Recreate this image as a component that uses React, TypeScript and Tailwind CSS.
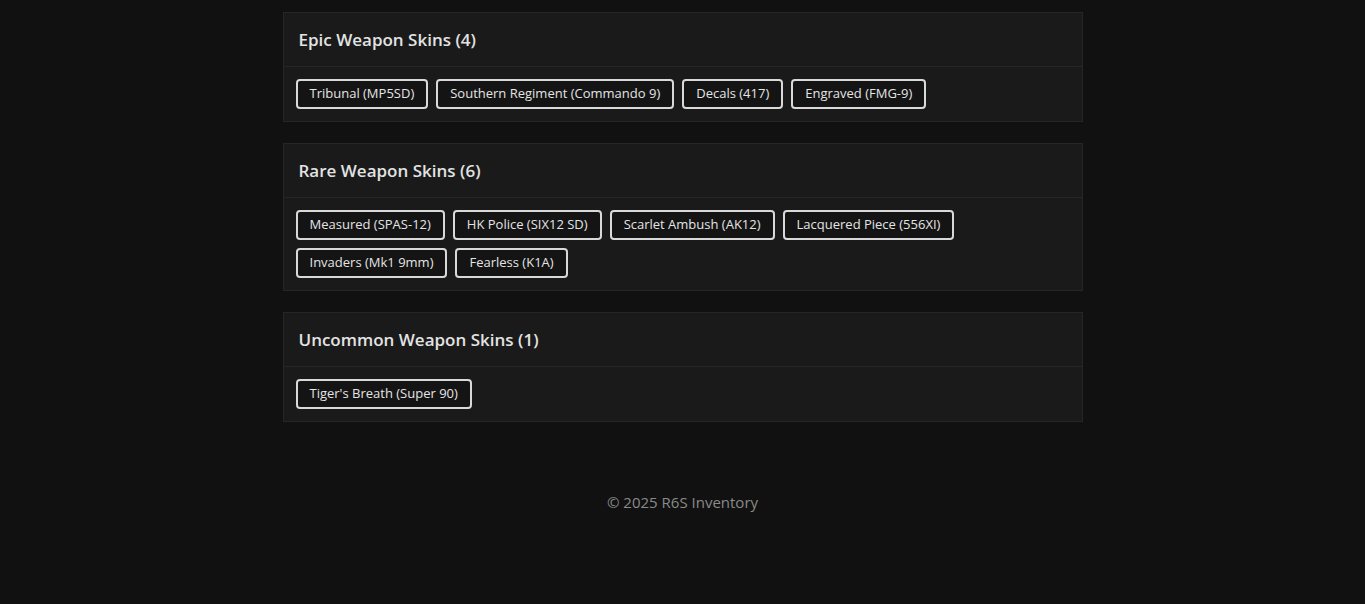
const sections = [
  {
    title: "Epic Weapon Skins",
    items: [
      "Tribunal (MP5SD)",
      "Southern Regiment (Commando 9)",
      "Decals (417)",
      "Engraved (FMG-9)",
    ],
  },
  {
    title: "Rare Weapon Skins",
    items: [
      "Measured (SPAS-12)",
      "HK Police (SIX12 SD)",
      "Scarlet Ambush (AK12)",
      "Lacquered Piece (556XI)",
      "Invaders (Mk1 9mm)",
      "Fearless (K1A)",
    ],
  },
  {
    title: "Uncommon Weapon Skins",
    items: ["Tiger's Breath (Super 90)"],
  },
];

function Section({ title, items }: { title: string; items: string[] }) {
  return (
    <section className="border border-[#262626] bg-[#1a1a1a]">
      <div className="flex h-[54px] items-center border-b border-[#262626] px-[15px]">
        <h2 className="text-[17px] font-semibold text-[#e3e3e3]">
          {title} ({items.length})
        </h2>
      </div>
      <div className="flex flex-wrap gap-2 p-3">
        {items.map((item) => (
          <span
            key={item}
            className="inline-flex h-[30px] items-center rounded-[4px] border-2 border-[#d9d9d9] bg-[#141414] px-3 text-[13px] text-[#e4e4e4]"
          >
            {item}
          </span>
        ))}
      </div>
    </section>
  );
}

export default function App() {
  return (
    <div className="min-h-[604px] bg-[#111111] font-['Open_Sans',sans-serif]">
      <main className="mx-auto flex w-[800px] flex-col gap-[21px] pt-3">
        {sections.map((s) => (
          <Section key={s.title} title={s.title} items={s.items} />
        ))}
      </main>
      <footer className="pt-[69px] text-center text-[15px] text-[#8a8a8a]">
        © 2025 R6S Inventory
      </footer>
    </div>
  );
}
